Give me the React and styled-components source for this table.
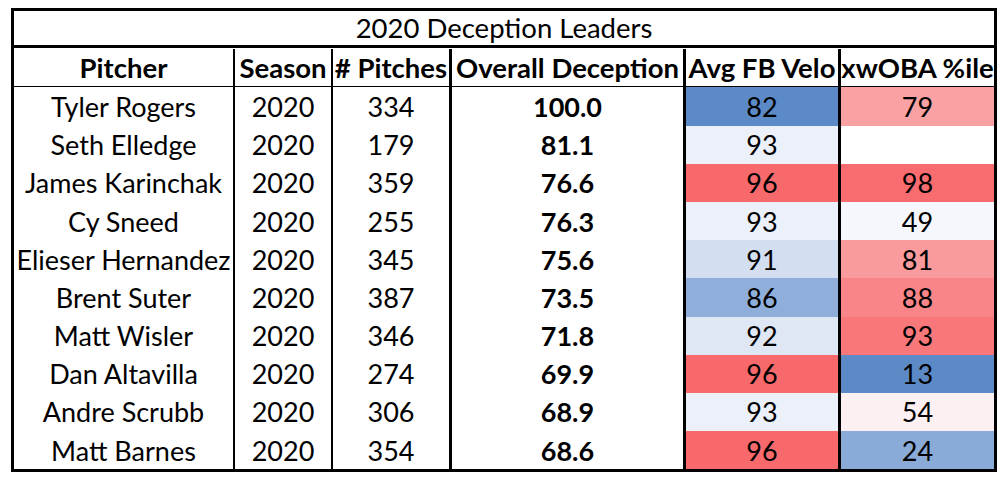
import React from 'react'
import styled, { createGlobalStyle } from 'styled-components'

const GlobalStyle = createGlobalStyle`
  html, body {
    margin: 0;
    padding: 0;
    background: #fff;
  }
  body {
    font-family: Lato, "Open Sans", "Liberation Sans", sans-serif;
    color: #000;
  }
`

const Sheet = styled.div`
  display: grid;
  grid-template-columns: 221px 98px 119px 234px 155px 153px;
  grid-auto-rows: 38.2px;
  width: max-content;
  margin: 8px 0 0 11px;
  border: 3px solid #000;
`

const Title = styled.div`
  grid-column: 1 / -1;
  height: 37px;
  box-sizing: border-box;
  border-bottom: 3px solid #000;
  display: flex;
  align-items: center;
  justify-content: center;
  font-size: 27.5px;
  padding-bottom: 1px;
`

const Cell = styled.div`
  box-sizing: border-box;
  display: flex;
  align-items: center;
  justify-content: center;
  white-space: nowrap;
  overflow: hidden;
  font-size: 27px;
  font-weight: ${(p) => (p.$bold ? 700 : 400)};
  background: ${(p) => p.$bg || '#fff'};
  border-right: ${(p) => (p.$edge ? `${p.$edge}px solid #000` : 'none')};
`

const HeadCell = styled(Cell)`
  height: 39px;
  border-bottom: 2px solid #000;
  font-size: 27.5px;
  font-weight: 700;
  padding-bottom: 1px;
`

const edges = [2, 2, 3, 3, 3, 0]

const headers = ['Pitcher', 'Season', '# Pitches', 'Overall Deception', 'Avg FB Velo', 'xwOBA %ile']

const rows = [
  ['Tyler Rogers', 334, '100.0', [82, '#5b8ac6'], [79, '#f9a1a3']],
  ['Seth Elledge', 179, '81.1', [93, '#ebf0f9'], ['', '#ffffff']],
  ['James Karinchak', 359, '76.6', [96, '#f8696b'], [98, '#f86b6e']],
  ['Cy Sneed', 255, '76.3', [93, '#ebf0f9'], [49, '#f5f7fc']],
  ['Elieser Hernandez', 345, '75.6', [91, '#d3dff0'], [81, '#f99b9d']],
  ['Brent Suter', 387, '73.5', [86, '#8fafda'], [88, '#f98588']],
  ['Matt Wisler', 346, '71.8', [92, '#dfe7f4'], [93, '#f8777a']],
  ['Dan Altavilla', 274, '69.9', [96, '#f8696b'], [13, '#5b8ac6']],
  ['Andre Scrubb', 306, '68.9', [93, '#ebf0f9'], [54, '#fcf0f2']],
  ['Matt Barnes', 354, '68.6', [96, '#f8696b'], [24, '#8aaad8']],
]

export default function App() {
  return (
    <>
      <GlobalStyle />
      <Sheet>
        <Title>2020 Deception Leaders</Title>
        {headers.map((h, i) => (
          <HeadCell key={h} $edge={edges[i]}>
            {h}
          </HeadCell>
        ))}
        {rows.map(([name, pitches, decep, velo, xwoba]) => (
          <React.Fragment key={name}>
            <Cell $edge={edges[0]}>{name}</Cell>
            <Cell $edge={edges[1]}>2020</Cell>
            <Cell $edge={edges[2]}>{pitches}</Cell>
            <Cell $edge={edges[3]} $bold>
              {decep}
            </Cell>
            <Cell $edge={edges[4]} $bg={velo[1]}>
              {velo[0]}
            </Cell>
            <Cell $edge={edges[5]} $bg={xwoba[1]}>
              {xwoba[0]}
            </Cell>
          </React.Fragment>
        ))}
      </Sheet>
    </>
  )
}
